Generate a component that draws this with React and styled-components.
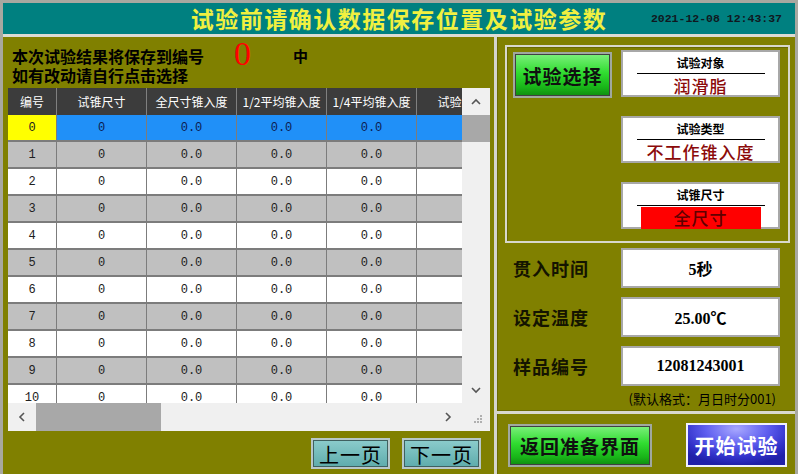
import React from 'react';
import styled, { createGlobalStyle } from 'styled-components';

const GlobalStyle = createGlobalStyle`
  html, body {
    margin: 0;
    padding: 0;
    background: #808000;
  }
  body {
    font-family: "Noto Sans CJK SC", sans-serif;
  }
  * { box-sizing: border-box; }
`;

const CJK = '"Noto Sans CJK SC", sans-serif';
const MONO = '"Liberation Mono", "Noto Sans CJK SC", monospace';
const SERIF = '"Liberation Serif", "Noto Sans CJK SC", serif';

const COLS = [49, 90, 90, 90, 90, 90];
const HEADERS = ['编号', '试锥尺寸', '全尺寸锥入度', '1/2平均锥入度', '1/4平均锥入度', '试验日期'];
const ROWS = Array.from({ length: 11 }, (_, i) => i);

// Layout shell
const Screen = styled.div`
  width: 798px;
  height: 474px;
  overflow: hidden;
  background: #808000;
  border: 3px solid #a8a8a0;
  border-bottom: none;
  display: flex;
  flex-direction: column;
`;

const Header = styled.header`
  height: 34px;
  flex: none;
  background: #008080;
  border-bottom: 3px solid #dcdcd4;
  display: grid;
  grid-template-columns: 1fr auto 1fr;
  align-items: center;
`;

const Title = styled.h1`
  grid-column: 2;
  margin: 0;
  font-family: ${CJK};
  font-size: 23px;
  font-weight: 700;
  color: #f0f040;
  letter-spacing: 1.5px;
  line-height: 1;
`;

const Clock = styled.div`
  justify-self: end;
  padding-right: 13px;
  font-family: ${MONO};
  font-size: 11.5px;
  font-weight: 700;
  color: #101820;
`;

const Body = styled.div`
  flex: 1;
  display: flex;
  min-height: 0;
`;

const LeftPanel = styled.section`
  width: 491px;
  flex: none;
  padding: 0 4px 0 5px;
  display: flex;
  flex-direction: column;
`;

const RightPanel = styled.section`
  flex: 1;
  border-left: 3px solid #d4d4cc;
  box-shadow: inset 1px 0 0 #6a6a00;
  padding: 8px 5px 0 8px;
  display: flex;
  flex-direction: column;
`;

// Left side
const Notice = styled.div`
  padding: 9px 0 0 4px;
  height: 51px;
  font-family: ${CJK};
  font-weight: 700;
  font-size: 16px;
  color: #000;
`;

const NoticeLine = styled.div`
  height: ${p => p.$h}px;
  line-height: ${p => p.$h}px;
  white-space: nowrap;
  display: flex;
  align-items: center;
`;

const SlotNumber = styled.span`
  margin-left: 30px;
  font-family: ${SERIF};
  font-size: 34px;
  font-weight: 400;
  color: #ff0000;
  line-height: 20px;
  position: relative;
  top: -2px;
`;

const SlotSuffix = styled.span`
  margin-left: 42px;
  font-size: 15px;
`;

const TableFrame = styled.div`
  width: 482px;
  height: 343px;
  display: grid;
  grid-template-columns: 454px 28px;
  grid-template-rows: 315px 28px;
  background: #f0f0f0;
`;

const Viewport = styled.div`
  overflow: hidden;
  background: #f0f0f0;
`;

const Row = styled.div`
  display: grid;
  grid-template-columns: ${COLS.map(c => c + 'px').join(' ')};
  width: ${COLS.reduce((a, b) => a + b, 0)}px;
  height: 27px;
`;

const HeadCell = styled.div`
  background: #3c3c3c;
  color: #fff;
  font-family: ${CJK};
  font-size: 12px;
  border-right: 1px solid #808080;
  display: flex;
  align-items: center;
  justify-content: center;
  white-space: nowrap;
  overflow: hidden;
`;

const Cell = styled.div`
  background: ${p => p.$bg};
  color: ${p => p.$fg};
  font-family: ${MONO};
  font-size: 12px;
  border-right: 1px solid #7c7c7c;
  border-bottom: 2px solid #7c7c7c;
  display: flex;
  align-items: center;
  justify-content: center;
  white-space: nowrap;
`;

const VScroll = styled.div`
  background: #f0f0f0;
  display: grid;
  grid-template-rows: 27px 27px 1fr 27px;
`;

const HScroll = styled.div`
  background: #f0f0f0;
  display: grid;
  grid-template-columns: 28px 125px 1fr 28px;
`;

const Arrow = styled.div`
  display: flex;
  align-items: center;
  justify-content: center;
  color: #606060;
`;

const Thumb = styled.div`
  background: #a8a8a8;
`;

const Corner = styled.div`
  background: #f0f0f0;
  display: flex;
  align-items: flex-end;
  justify-content: flex-end;
  padding: 0 8px 8px 0;
`;

const Pager = styled.div`
  display: flex;
  justify-content: flex-end;
  gap: 12px;
  padding: 7px 9px 0 0;
`;

const PageButton = styled.button`
  width: 79px;
  height: 31px;
  padding: 0;
  background: linear-gradient(#8ccccc, #5eacac);
  border: 2px solid #b8c8c8;
  outline: 1px solid #406060;
  outline-offset: -3px;
  font-family: ${CJK};
  font-size: 20px;
  color: #000;
  letter-spacing: 1px;
`;

// Right side
const GroupBox = styled.div`
  width: 285px;
  border: 2px solid #d8d8cc;
  box-shadow: inset 1px 1px 0 #6a6a00;
  padding: 3px 8px 12px 6px;
  display: grid;
  grid-template-columns: 99px 159px;
  grid-auto-rows: 47px;
  column-gap: 9px;
  row-gap: 19px;
`;

const GreenButton = styled.button`
  width: ${p => p.$w}px;
  height: ${p => p.$h}px;
  margin-top: ${p => p.$mt || 0}px;
  padding: 0;
  background: linear-gradient(#7cf07c 0%, #30dc30 45%, #18b418 80%, #108c10 100%);
  border: 2px solid #a0a8a0;
  outline: 1px solid #404040;
  outline-offset: -3px;
  font-family: ${CJK};
  font-weight: 700;
  font-size: 19px;
  color: #101010;
  letter-spacing: 1px;
`;

const InfoBox = styled.div`
  grid-column: 2;
  background: #fff;
  border: 2px solid #a8a8a8;
  display: flex;
  flex-direction: column;
  align-items: center;
  padding-top: 3px;
`;

const InfoTitle = styled.div`
  width: 128px;
  text-align: center;
  font-family: ${CJK};
  font-size: 12px;
  font-weight: 700;
  color: #000;
  line-height: 16px;
  border-bottom: 1px solid #000;
  padding-bottom: 2px;
`;

const InfoValue = styled.div`
  width: 120px;
  margin-top: 1px;
  text-align: center;
  font-family: ${CJK};
  font-size: 17px;
  font-weight: 500;
  line-height: 22px;
  color: ${p => (p.$alert ? '#600000' : '#8b0a0a')};
  background: ${p => (p.$alert ? '#ff0000' : 'transparent')};
  letter-spacing: 1px;
`;

const ParamList = styled.div`
  margin-top: 5px;
  display: flex;
  flex-direction: column;
  gap: 9px;
`;

const ParamRow = styled.div`
  display: grid;
  grid-template-columns: 116px 159px;
  height: 40px;
  align-items: center;
`;

const ParamLabel = styled.div`
  padding-left: 8px;
  font-family: ${CJK};
  font-size: 18px;
  font-weight: 700;
  color: #141400;
  letter-spacing: 1px;
`;

const ParamValue = styled.div`
  height: 40px;
  background: #fff;
  border: 2px solid #a8a8a8;
  display: flex;
  align-items: center;
  justify-content: center;
  font-family: ${SERIF};
  font-size: 16px;
  font-weight: 700;
  color: #000;
`;

const Hint = styled.div`
  margin-top: 5px;
  padding-right: 14px;
  text-align: right;
  font-family: ${CJK};
  font-size: 13px;
  line-height: 15px;
  color: #000;
`;

const Divider = styled.div`
  margin: 5px -5px 0 -8px;
  height: 3px;
  background: #d8d8cc;
  box-shadow: 0 -1px 0 #6a6a00;
`;

const ActionBar = styled.div`
  display: flex;
  justify-content: space-between;
  align-items: center;
  padding: 9px 3px 0 3px;
`;

const StartButton = styled.button`
  width: 101px;
  height: 44px;
  padding: 0;
  background: radial-gradient(ellipse 70% 90% at 50% 10%, #a8a8ff 0%, #6060f0 45%, #3030c8 80%, #2020a8 100%);
  border: 2px solid #f0f0ff;
  font-family: ${CJK};
  font-weight: 700;
  font-size: 20px;
  color: #fff;
  letter-spacing: 1px;
`;

const Chevron = ({ dir }) => {
  const paths = {
    up: 'M1 6 L5 2 L9 6',
    down: 'M1 2 L5 6 L9 2',
    left: 'M6 1 L2 5 L6 9',
    right: 'M2 1 L6 5 L2 9',
  };
  const vertical = dir === 'up' || dir === 'down';
  return (
    <svg width={vertical ? 10 : 8} height={vertical ? 8 : 10} viewBox={vertical ? '0 0 10 8' : '0 0 8 10'}>
      <path d={paths[dir]} fill="none" stroke="#555" strokeWidth="1.6" />
    </svg>
  );
};

const Grip = () => (
  <svg width="8" height="8" viewBox="0 0 8 8">
    {[[6, 0], [6, 3], [3, 3], [6, 6], [3, 6], [0, 6]].map(([x, y]) => (
      <rect key={`${x}-${y}`} x={x} y={y} width="2" height="2" fill="#b0b0b0" />
    ))}
  </svg>
);

function cellColors(row, col) {
  if (row === 0) {
    return col === 0 ? { bg: '#ffff00', fg: '#202020' } : { bg: '#2090f8', fg: '#0c1c50' };
  }
  return { bg: row % 2 ? '#c0c0c0' : '#ffffff', fg: '#202020' };
}

const cellText = ['', '0', '0.0', '0.0', '0.0', ''];

const DataTable = () => (
  <TableFrame>
    <Viewport>
      <Row>
        {HEADERS.map(h => <HeadCell key={h}>{h}</HeadCell>)}
      </Row>
      {ROWS.map(r => (
        <Row key={r}>
          {COLS.map((_, c) => {
            const { bg, fg } = cellColors(r, c);
            return (
              <Cell key={c} $bg={bg} $fg={fg}>
                {c === 0 ? r : cellText[c]}
              </Cell>
            );
          })}
        </Row>
      ))}
    </Viewport>
    <VScroll>
      <Arrow><Chevron dir="up" /></Arrow>
      <Thumb />
      <div />
      <Arrow><Chevron dir="down" /></Arrow>
    </VScroll>
    <HScroll>
      <Arrow><Chevron dir="left" /></Arrow>
      <Thumb />
      <div />
      <Arrow><Chevron dir="right" /></Arrow>
    </HScroll>
    <Corner><Grip /></Corner>
  </TableFrame>
);

const infoBoxes = [
  { title: '试验对象', value: '润滑脂' },
  { title: '试验类型', value: '不工作锥入度' },
  { title: '试锥尺寸', value: '全尺寸', alert: true },
];

const params = [
  { label: '贯入时间', value: '5秒' },
  { label: '设定温度', value: '25.00℃' },
  { label: '样品编号', value: '12081243001' },
];

export default function App() {
  return (
    <>
      <GlobalStyle />
      <Screen>
        <Header>
          <Title>试验前请确认数据保存位置及试验参数</Title>
          <Clock>2021-12-08 12:43:37</Clock>
        </Header>
        <Body>
          <LeftPanel>
            <Notice>
              <NoticeLine $h={20}>
                本次试验结果将保存到编号
                <SlotNumber>0</SlotNumber>
                <SlotSuffix>中</SlotSuffix>
              </NoticeLine>
              <NoticeLine $h={18}>如有改动请自行点击选择</NoticeLine>
            </Notice>
            <DataTable />
            <Pager>
              <PageButton>上一页</PageButton>
              <PageButton>下一页</PageButton>
            </Pager>
          </LeftPanel>
          <RightPanel>
            <GroupBox>
              <GreenButton $w={99} $h={46} $mt={2}>试验选择</GreenButton>
              {infoBoxes.map(b => (
                <InfoBox key={b.title}>
                  <InfoTitle>{b.title}</InfoTitle>
                  <InfoValue $alert={b.alert}>{b.value}</InfoValue>
                </InfoBox>
              ))}
            </GroupBox>
            <ParamList>
              {params.map(p => (
                <ParamRow key={p.label}>
                  <ParamLabel>{p.label}</ParamLabel>
                  <ParamValue>{p.value}</ParamValue>
                </ParamRow>
              ))}
            </ParamList>
            <Hint>(默认格式：月日时分001)</Hint>
            <Divider />
            <ActionBar>
              <GreenButton $w={144} $h={43}>返回准备界面</GreenButton>
              <StartButton>开始试验</StartButton>
            </ActionBar>
          </RightPanel>
        </Body>
      </Screen>
    </>
  );
}
